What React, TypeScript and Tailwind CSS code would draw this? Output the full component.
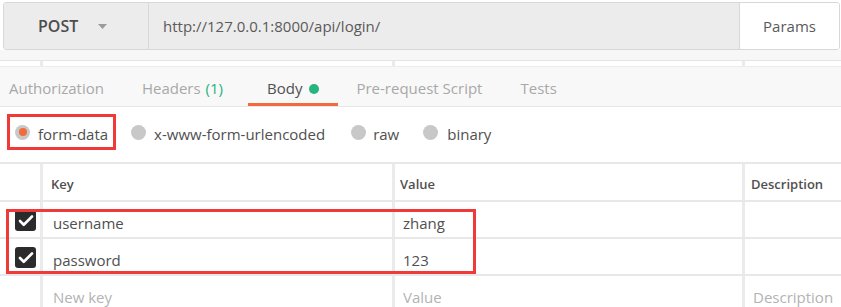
import { Check } from 'lucide-react'

const FONT = { fontFamily: '"Open Sans", "Liberation Sans", sans-serif' }

const ROWS = [
  { key: 'username', value: 'zhang' },
  { key: 'password', value: '123' },
]

function Radio({ checked }: { checked?: boolean }) {
  return (
    <span className="w-[15px] h-[15px] rounded-full bg-[#c8c8c8] flex items-center justify-center flex-shrink-0">
      {checked && <span className="w-[8px] h-[8px] rounded-full bg-[#f26b3a]" />}
    </span>
  )
}

function Checkbox() {
  return (
    <span className="w-[21px] h-[21px] rounded-[3px] bg-[#2b2b2b] flex items-center justify-center">
      <Check size={18} strokeWidth={3.5} className="text-white" />
    </span>
  )
}

export default function App() {
  return (
    <div className="w-[841px] h-[307px] overflow-hidden bg-white relative text-[#505050]" style={FONT}>

      {/* Request bar */}
      <div className="pt-[2px] pl-[3px] pr-[1px]">
        <div className="flex h-[48px] border border-[#d8d8d8] rounded-[3px] overflow-hidden">
          <div className="w-[144px] bg-[#ececec] flex items-center pl-[34px]">
            <span className="text-[16px] font-semibold text-[#4d4d4d]">POST</span>
            <svg width="9" height="5" viewBox="0 0 9 5" className="ml-[20px] mt-[1px]">
              <path d="M0 0h9L4.5 5z" fill="#9b9b9b" />
            </svg>
          </div>
          <div className="flex-1 bg-[#ececec] border-l border-[#d8d8d8] flex items-center pl-[14px] text-[15px] text-[#5a5a5a]">
            http://127.0.0.1:8000/api/login/
          </div>
          <div className="w-[100px] bg-white border-l border-[#d8d8d8] flex items-center justify-center text-[15px] text-[#5a5a5a]">
            Params
          </div>
        </div>
      </div>

      {/* Strip with column edges from above */}
      <div className="h-[11px] bg-[#f7f7f7] border-b border-[#e4e4e4]" />
      <div className="h-[5px] grid grid-cols-[40px_352px_350px_1fr]">
        <div />
        <div className="border-l-[3px] border-[#ebebeb]" />
        <div className="border-l-[3px] border-[#ebebeb]" />
        <div className="border-l-[3px] border-[#ebebeb]" />
      </div>

      {/* Tabs */}
      <div className="h-[41px] bg-[#f8f8f8] border-t border-[#ececec] border-b border-b-[#e6e6e6] flex text-[15px] text-[#a8a8a8]">
        <div className="flex ml-[-10px]">
          <div className="px-[19px] pt-[4px] flex items-center">Authorization</div>
          <div className="pl-[19px] pr-[25px] pt-[4px] flex items-center">
            Headers <span className="ml-[5px] text-[#26b47f]">(1)</span>
          </div>
          <div className="px-[19px] pt-[7px] flex items-center text-[#505050] border-b-[3px] border-[#f26b3a]">
            Body
            <span className="ml-[7px] w-[10px] h-[10px] rounded-full bg-[#26b47f]" />
          </div>
          <div className="pl-[18px] pr-[19px] pt-[4px] flex items-center">Pre-request Script</div>
          <div className="px-[19px] pt-[4px] flex items-center">Tests</div>
        </div>
      </div>

      {/* Body modes */}
      <div className="h-[55px] flex items-start pt-[7px] pl-[7px] text-[15px]">
        <div className="h-[36px] border-[3px] border-[#f03a3a] flex items-center pl-[5px] pr-[5px]">
          <Radio checked />
          <span className="ml-[8px] pt-[5px]">form-data</span>
        </div>
        <div className="h-[36px] flex items-center ml-[15px]">
          <Radio />
          <span className="ml-[8px] pt-[5px]">x-www-form-urlencoded</span>
        </div>
        <div className="h-[36px] flex items-center ml-[26px]">
          <Radio />
          <span className="ml-[7px] pt-[5px]">raw</span>
        </div>
        <div className="h-[36px] flex items-center ml-[24px]">
          <Radio />
          <span className="ml-[9px] pt-[5px]">binary</span>
        </div>
      </div>

      {/* Params table */}
      <div className="border-t-2 border-[#e8e8e8]">
        <div className="grid grid-cols-[40px_352px_350px_1fr] h-[38px] border-b-2 border-[#e8e8e8] text-[13px] font-semibold text-[#505050]">
          <div />
          <div className="border-l-[3px] border-[#ebebeb] flex items-center pl-[8px] pt-[6px]">Key</div>
          <div className="border-l-[3px] border-[#ebebeb] flex items-center pl-[5px] pt-[6px]">Value</div>
          <div className="border-l-[3px] border-[#ebebeb] flex items-center pl-[6px] pt-[6px]">Description</div>
        </div>
        {ROWS.map(row => (
          <div key={row.key} className="grid grid-cols-[40px_352px_350px_1fr] h-[37px] border-b-2 border-[#e8e8e8] text-[15px]">
            <div className="flex items-center pl-[15px] pt-[2px]">
              <Checkbox />
            </div>
            <div className="border-l-[3px] border-[#ebebeb] flex items-center pl-[10px] pt-[8px]">{row.key}</div>
            <div className="border-l-[3px] border-[#ebebeb] flex items-center pl-[8px] pt-[8px]">{row.value}</div>
            <div className="border-l-[3px] border-[#ebebeb]" />
          </div>
        ))}
        <div className="grid grid-cols-[40px_352px_350px_1fr] h-[35px] text-[15px] text-[#b3b3b3]">
          <div />
          <div className="border-l-[3px] border-[#ebebeb] flex items-center pl-[10px] pt-[8px]">New key</div>
          <div className="border-l-[3px] border-[#ebebeb] flex items-center pl-[8px] pt-[8px]">Value</div>
          <div className="border-l-[3px] border-[#ebebeb] flex items-center pl-[8px] pt-[8px]">Description</div>
        </div>
      </div>

      {/* Annotation box around the filled rows */}
      <div className="absolute left-[6px] top-[209px] w-[470px] h-[65px] border-[3px] border-[#f03a3a]" />
    </div>
  )
}
